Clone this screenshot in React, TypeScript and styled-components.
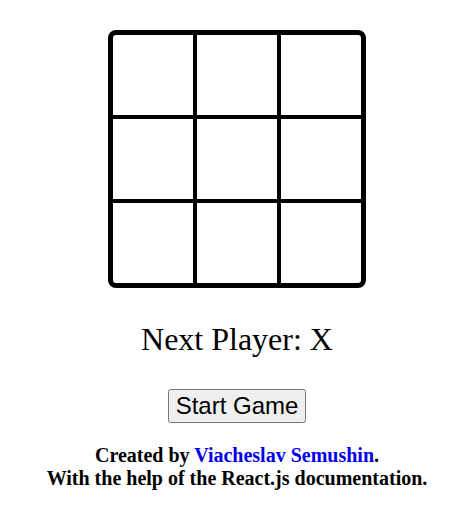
import React, { useState } from 'react';
import styled, { createGlobalStyle } from 'styled-components';

const GlobalStyle = createGlobalStyle`
  body {
    margin: 8px;
    background: #ffffff;
    font-family: "Liberation Serif", "Times New Roman", serif;
    color: #000000;
  }
`;

const Page = styled.div`
  display: flex;
  flex-direction: column;
  align-items: center;
  padding-top: 22px;
  padding-left: 4px;
`;

const Board = styled.div`
  display: grid;
  grid-template-columns: repeat(3, 80px);
  grid-template-rows: repeat(3, 80px);
  border: 5px solid #000;
  border-radius: 8px;
  background: #000;
  gap: 4px;
  margin-right: 1px;
`;

const Cell = styled.button`
  background: #fff;
  border: none;
  padding: 0;
  margin: 0;
  font-family: "Liberation Sans", Arial, sans-serif;
  font-size: 48px;
  cursor: pointer;
  border-radius: ${({ $corner }: { $corner?: string }) => $corner || '0'};
`;

const Status = styled.div`
  margin-top: 33px;
  font-size: 32px;
  line-height: 36px;
`;

const StartButton = styled.button`
  margin-top: 32px;
  font-family: "Liberation Sans", Arial, sans-serif;
  font-size: 24px;
`;

const Footer = styled.footer`
  margin-top: 21px;
  text-align: center;
  font-weight: bold;
  font-size: 20px;
  line-height: 23px;
`;

const AuthorLink = styled.a`
  color: #0000ee;
  text-decoration: none;
`;

const corners: Record<number, string> = {
  0: '3px 0 0 0',
  2: '0 3px 0 0',
  6: '0 0 0 3px',
  8: '0 0 3px 0',
};

export default function App() {
  const [squares, setSquares] = useState<(string | null)[]>(Array(9).fill(null));
  const [xNext, setXNext] = useState(true);

  const play = (i: number) => {
    if (squares[i]) return;
    const next = squares.slice();
    next[i] = xNext ? 'X' : 'O';
    setSquares(next);
    setXNext(!xNext);
  };

  const reset = () => {
    setSquares(Array(9).fill(null));
    setXNext(true);
  };

  return (
    <>
      <GlobalStyle />
      <Page>
        <Board>
          {squares.map((v, i) => (
            <Cell key={i} $corner={corners[i]} onClick={() => play(i)}>
              {v}
            </Cell>
          ))}
        </Board>
        <Status>Next Player: {xNext ? 'X' : 'O'}</Status>
        <StartButton onClick={reset}>Start Game</StartButton>
        <Footer>
          Created by <AuthorLink href="#">Viacheslav Semushin</AuthorLink>.
          <br />
          With the help of the React.js documentation.
        </Footer>
      </Page>
    </>
  );
}
